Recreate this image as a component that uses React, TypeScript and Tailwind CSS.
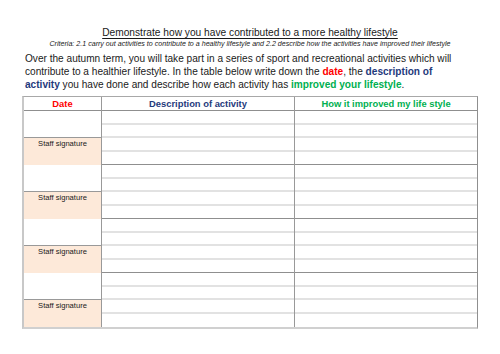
const blocks = [0, 1, 2, 3]

function Lines() {
  return (
    <div className="flex flex-col">
      <div className="h-[13.5px] border-b-2 border-[#e2e2e2]"></div>
      <div className="h-[13.5px] border-b-2 border-[#e2e2e2]"></div>
      <div className="h-[13.5px] border-b-2 border-[#e2e2e2]"></div>
      <div className="h-[13.5px]"></div>
    </div>
  )
}

export default function App() {
  return (
    <div className="w-[500px] h-[354px] bg-white overflow-hidden font-['Liberation_Sans',Arial,sans-serif] text-[#1a1a1a]">
      <div className="pt-[27px] flex flex-col items-center">
        <h1 className="text-[10.2px] leading-[12px] underline underline-offset-2">
          Demonstrate how you have contributed to a more healthy lifestyle
        </h1>
        <p className="text-[7.1px] leading-[9px] italic mt-[1px]">
          Criteria: 2.1 carry out activities to contribute to a healthy lifestyle and 2.2 describe how the activities have improved their lifestyle
        </p>
      </div>
      <p className="ml-[25px] mt-[3px] text-[10.1px] leading-[13px] whitespace-nowrap">
        Over the autumn term, you will take part in a series of sport and recreational activities which will
        <br />
        contribute to a healthier lifestyle. In the table below write down the{' '}
        <span className="font-bold text-[#ff0000]">date</span>, the{' '}
        <span className="font-bold text-[#1f3a7c]">description of</span>
        <br />
        <span className="font-bold text-[#1f3a7c]">activity</span> you have done and describe how each activity has{' '}
        <span className="font-bold text-[#00b050]">improved your lifestyle</span>.
      </p>
      <div className="ml-[22px] mt-[5px] w-[456px] border-l-2 border-l-[#c8c8c8] border-r border-r-[#8f8f8f] border-t border-t-[#a8a8a8] border-b-2 border-b-[#d0d0d0]">
        <div className="grid grid-cols-[78px_193px_1fr] h-[14px] border-b border-[#8f8f8f] text-[9.4px] font-bold leading-[14px] text-center">
          <div className="text-[#ff0000] border-r border-[#999]">Date</div>
          <div className="text-[#1f3a7c] border-r border-[#999]">Description of activity</div>
          <div className="text-[#00b050]">How it improved my life style</div>
        </div>
        {blocks.map((b) => (
          <div
            key={b}
            className={`grid grid-cols-[78px_193px_1fr] h-[54px] ${b < blocks.length - 1 ? 'border-b border-[#8f8f8f]' : ''}`}
          >
            <div className="flex flex-col border-r border-[#999]">
              <div className="h-[27px] bg-white border-b border-[#999]"></div>
              <div className="flex-1 bg-[#fde9d9] text-[7.6px] leading-[12px] text-center">Staff signature</div>
            </div>
            <div className="border-r border-[#999]">
              <Lines />
            </div>
            <div>
              <Lines />
            </div>
          </div>
        ))}
      </div>
    </div>
  )
}
